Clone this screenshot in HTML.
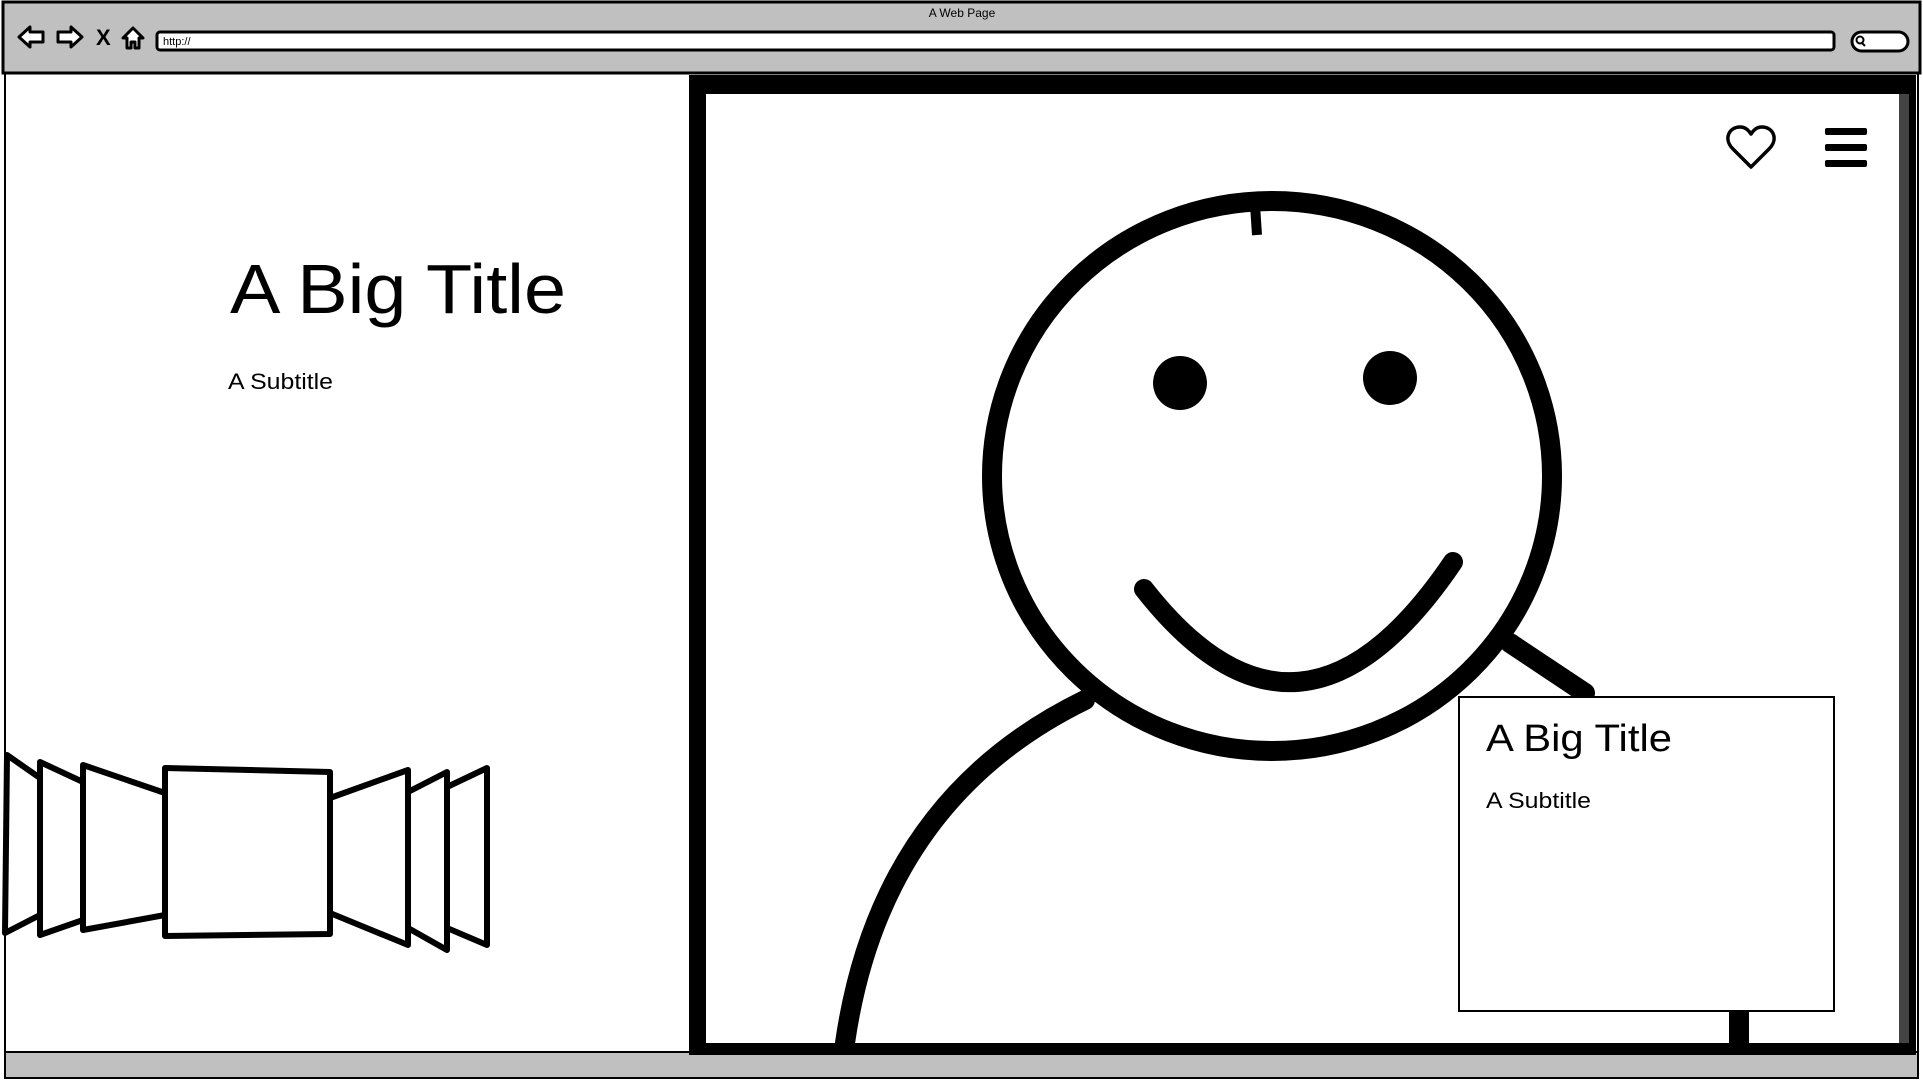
<!DOCTYPE html>
<html><head><meta charset="utf-8"><style>
html,body{margin:0;padding:0;background:#fff;overflow:hidden}
svg{display:block}
text{font-family:"Liberation Sans",sans-serif;fill:#000}
</style></head><body>
<svg width="1923" height="1080" viewBox="0 0 1923 1080" xmlns="http://www.w3.org/2000/svg">
<rect x="0" y="0" width="1923" height="1080" fill="#fff"/>
<!-- toolbar -->
<rect x="3" y="2" width="1917" height="71" fill="#c0c0c0" stroke="#000" stroke-width="3"/>
<text x="962" y="17" font-size="12" text-anchor="middle">A Web Page</text>
<g fill="#fff" stroke="#000" stroke-width="3" stroke-linejoin="round">
<path d="M19 37 L30 27 L30 32 L43 32 L43 42 L30 42 L30 47 Z"/>
<path d="M82 37 L71 27 L71 32 L58 32 L58 42 L71 42 L71 47 Z"/>
<path d="M133 28 L123 38 L127 38 L127 48 L131 48 L131 42 L135 42 L135 48 L139 48 L139 38 L143 38 Z"/>
</g>
<text x="96" y="45" font-size="22" font-weight="bold">X</text>
<rect x="157" y="32" width="1677" height="18" rx="3" fill="#fff" stroke="#000" stroke-width="3"/>
<text x="163" y="45" font-size="11">http://</text>
<rect x="1852" y="32" width="56" height="19" rx="9.5" fill="#fff" stroke="#000" stroke-width="3"/>
<circle cx="1860" cy="40" r="3.5" fill="none" stroke="#000" stroke-width="2"/>
<line x1="1862" y1="43" x2="1865" y2="46" stroke="#000" stroke-width="2"/>
<!-- content borders -->
<line x1="5" y1="73" x2="5" y2="1078" stroke="#000" stroke-width="2"/>
<line x1="1918" y1="73" x2="1918" y2="1078" stroke="#000" stroke-width="2"/>
<rect x="5" y="1052" width="1913" height="26" fill="#c0c0c0" stroke="#000" stroke-width="2"/>
<!-- left texts -->
<text x="230" y="313" font-size="70" textLength="336" lengthAdjust="spacingAndGlyphs">A Big Title</text>
<text x="228" y="389" font-size="22" textLength="105" lengthAdjust="spacingAndGlyphs">A Subtitle</text>
<!-- coverflow -->
<g fill="#fff" stroke="#000" stroke-width="6" stroke-linejoin="round">
<path d="M7 755 L40 778 L40 915 L5 933 Z"/>
<path d="M40 762 L83 782 L83 920 L40 935 Z"/>
<path d="M83 765 L165 793 L165 915 L83 930 Z"/>
<path d="M487 768 L447 787 L447 928 L487 945 Z"/>
<path d="M447 772 L408 792 L408 928 L447 950 Z"/>
<path d="M408 770 L330 798 L330 913 L408 945 Z"/>
<path d="M165 768 L330 772 L330 934 L165 936 Z"/>
</g>
<!-- image frame -->
<rect x="689" y="75" width="1227" height="980" fill="#000"/>
<rect x="706" y="94" width="1193" height="949" fill="#fff"/>
<rect x="1899" y="94" width="10" height="949" fill="#444"/>
<!-- smiley -->
<g fill="none" stroke="#000" stroke-width="20" stroke-linecap="round">
<ellipse cx="1272" cy="476" rx="280" ry="275"/>
<path d="M1144 589 Q1300 788 1453 562"/>
<path d="M1085 700 Q880 800 845 1043"/>
<path d="M1510 643 L1585 693"/>
<path d="M1739 1005 L1739 1043"/>
</g>
<line x1="1255" y1="205" x2="1257" y2="235" stroke="#000" stroke-width="10"/>
<circle cx="1180" cy="383" r="27"/>
<circle cx="1390" cy="378" r="27"/>
<!-- card -->
<rect x="1459" y="697" width="375" height="314" fill="#fff" stroke="#000" stroke-width="2"/>
<text x="1486" y="751" font-size="38" textLength="186" lengthAdjust="spacingAndGlyphs">A Big Title</text>
<text x="1486" y="808" font-size="22" textLength="105" lengthAdjust="spacingAndGlyphs">A Subtitle</text>
<!-- heart -->
<path d="M1751 167 L1733 149 C1723 139 1729 127 1740 127 C1746 127 1749 131 1751 134 C1753 131 1756 127 1762 127 C1773 127 1779 139 1769 149 Z" fill="none" stroke="#000" stroke-width="3.5" stroke-linejoin="round"/>
<!-- hamburger -->
<g fill="#000"><rect x="1825" y="128" width="42" height="7" rx="2"/><rect x="1825" y="144" width="42" height="7" rx="2"/><rect x="1825" y="160" width="42" height="7" rx="2"/></g>
</svg>
</body></html>
